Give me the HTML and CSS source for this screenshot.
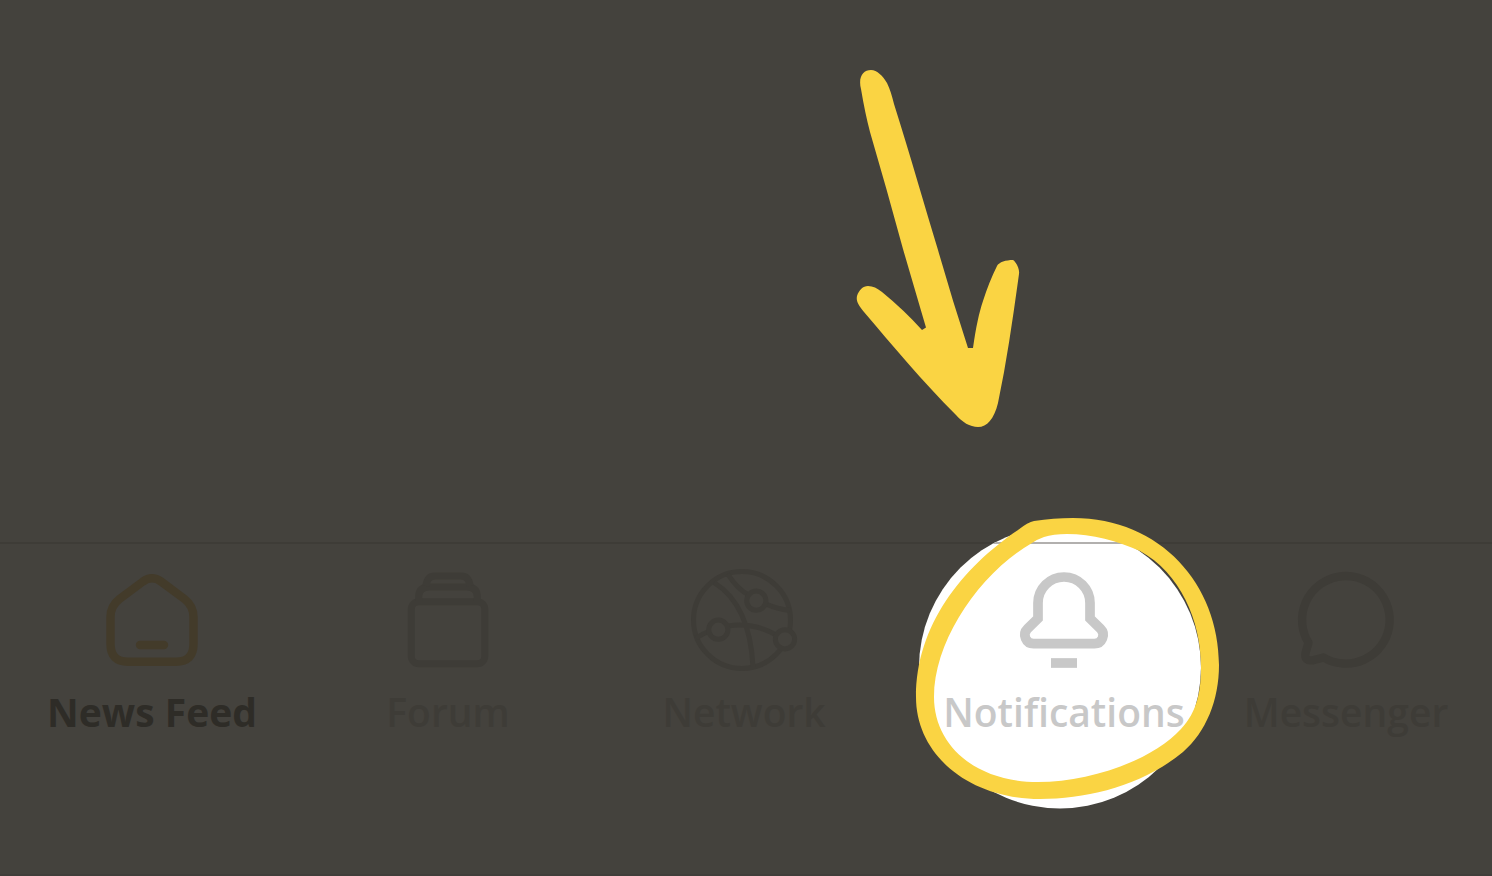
FILE: index.html
```html
<!DOCTYPE html>
<html lang="en">
<head>
<meta charset="utf-8">
<meta name="viewport" content="width=device-width, initial-scale=1">
<title>Notifications</title>
<link rel="stylesheet" href="styles.css">
</head>
<body>
<div class="page">
  <main class="stage">
    <svg class="arrow" viewBox="850 60 180 380" aria-hidden="true">
      <path d="M861 89C858 77 863 70 871 70C877 70 883 76 887 83C890 89 892 96 894 104C911 158 925 207 938 250Q952 299 968 348H973C976 327 979 313 983 301Q989 282 997 266C999 262 1006 260 1013 260C1015 261 1020 268 1019 274C1013 317 1007 360 998 403C994 419 987 427 978 427C970 427 962 422 956 415C922 381 893 346 864 312C858 305 856 301 857 296C859 290 863 286 868 286C873 286 877 288 882 292Q904 310 922 330L926 327.500C918 300 910 273 903 249Q887 190 870 132Q865 113 861 89Z"/>
    </svg>
  </main>
  <nav class="tabs" aria-label="Main">
    <a class="tab tab-active" href="#feed" aria-current="page">
      <svg class="icon icon-feed" viewBox="100 568 104 104" aria-hidden="true">
        <path d="M143 581.500Q152 575 161 581.500L184.500 599Q193.500 606 193.500 617V644Q193.500 661.700 176 661.700H128Q110.500 661.700 110.500 644V617Q110.500 606 119.500 599Z"/>
        <path d="M140 645H164"/>
      </svg>
      <span>News Feed</span>
    </a>
    <a class="tab" href="#forum">
      <svg class="icon icon-forum" viewBox="396 568 104 104" aria-hidden="true">
        <rect x="411.300" y="601.700" width="73.500" height="62" rx="7.500"/>
        <path d="M418.700 601V597Q418.700 587 429 587H467Q477.300 587 477.300 597V601"/>
        <path d="M426 586Q427 576 435 576H461Q469 576 470 586"/>
      </svg>
      <span>Forum</span>
    </a>
    <a class="tab" href="#network">
      <svg class="icon icon-network" viewBox="692 568 104 104" aria-hidden="true">
        <circle cx="742" cy="620" r="48.500"/>
        <path d="M714 582.500Q750 605 753 667M727.700 574Q738 590 749 595M766 604Q777 609 790 610.500M696 638Q702 634 710 631M728 626Q753 622 776 635"/>
        <circle class="node" cx="756.300" cy="600.700" r="9.600"/>
        <circle class="node" cx="718.300" cy="629.700" r="9.600"/>
        <circle class="node" cx="785" cy="639.300" r="9.600"/>
      </svg>
      <span>Network</span>
    </a>
    <a class="tab tab-spotlit" href="#notifications">
      <svg class="spotlight" viewBox="904 510 320 310" aria-hidden="true">
        <clipPath id="spot"><circle cx="1060" cy="667.500" r="141"/></clipPath>
        <g clip-path="url(#spot)">
          <rect class="spot-fill" x="904" y="510" width="320" height="310"/>
          <rect class="spot-line" x="904" y="542" width="320" height="2"/>
        </g>
        <path class="ring" fill-rule="evenodd" d="M1034 521C1047 519 1060 518 1073 518C1161 518 1219 585 1219 665C1219 700 1206 732 1183 752C1143 785 1089 799 1040 799C969 799 916 755 916 697C916 625 962 568 1018 530Q1028 522 1034 521ZM1044 537C1050 535 1058 534 1067 534C1092 534 1118 541 1140 551C1180 573 1201 620 1201 667C1201 692 1197 712 1181 729C1153 760 1090 782 1038 782C975 782 934 745 934 697C934 640 980 573 1032 543Q1038 539 1044 537Z"/>
      </svg>
      <svg class="icon icon-bell" viewBox="1012 568 104 104" aria-hidden="true">
        <path d="M1038 603A26 26 0 0 1 1090 603V618.500L1100.500 628.800A8.700 8.700 0 0 1 1094.300 643.700H1033.700A8.700 8.700 0 0 1 1027.500 628.800L1038 618.500Z"/>
        <path d="M1051 663H1077"/>
      </svg>
      <span>Notifications</span>
    </a>
    <a class="tab" href="#messenger">
      <svg class="icon icon-chat" viewBox="1294 568 104 104" aria-hidden="true">
        <path d="M1308.500 642.700A43.800 43.800 0 1 1 1323.500 657.500L1313 660.300Q1304 661.500 1305.500 653Z"/>
      </svg>
      <span>Messenger</span>
    </a>
  </nav>
</div>
</body>
</html>
```
FILE: styles.css
```css
:root {
  --surface: #44423d;
  --muted: #3e3c37;
  --yellow: #fad443;
  --spot-gray: #c8c8c8;
}

* {
  box-sizing: border-box;
}

body {
  margin: 0;
  background: var(--surface);
  font-family: "Open Sans", "Noto Sans", sans-serif;
}

.page {
  display: flex;
  flex-direction: column;
  min-height: 100vh;
}

.stage {
  flex: 1;
  padding-top: 60px;
}

.arrow {
  display: block;
  width: 180px;
  margin-left: 57%;
  fill: var(--yellow);
}

.tabs {
  display: grid;
  grid-template-columns: 76fr 72fr 76fr 84fr 57fr;
  padding: 24px 32px 134px 0;
  border-top: 2px solid var(--muted);
  border-bottom: 2px solid #403e3a;
}

.tab {
  position: relative;
  display: flex;
  flex-direction: column;
  align-items: center;
  gap: 12px;
  min-width: 0;
  color: var(--muted);
  font-size: 39px;
  font-weight: 600;
  line-height: 56px;
  text-decoration: none;
  white-space: nowrap;
}

.tab span {
  position: relative;
}

.tab-active {
  color: #2e2c27;
  font-weight: 700;
}

.tab-spotlit {
  color: var(--spot-gray);
}

.icon {
  position: relative;
  width: 104px;
  height: 104px;
  overflow: visible;
  fill: none;
  stroke: currentColor;
}

.icon-feed {
  stroke: #433b2a;
  stroke-width: 8.4;
  stroke-linecap: round;
}

.icon-forum {
  stroke-width: 7;
}

.icon-network {
  stroke-width: 5;
}

.node {
  fill: var(--surface);
}

.icon-bell {
  stroke-width: 9.7;
}

.icon-chat {
  stroke-width: 8.3;
  stroke-linejoin: round;
}

.spotlight {
  position: absolute;
  top: -58px;
  left: 50%;
  width: 320px;
  height: 310px;
  margin-left: -160px;
}

.spot-fill {
  fill: #fff;
}

.spot-line {
  fill: #b2b0ae;
}

.ring {
  fill: var(--yellow);
}
```
